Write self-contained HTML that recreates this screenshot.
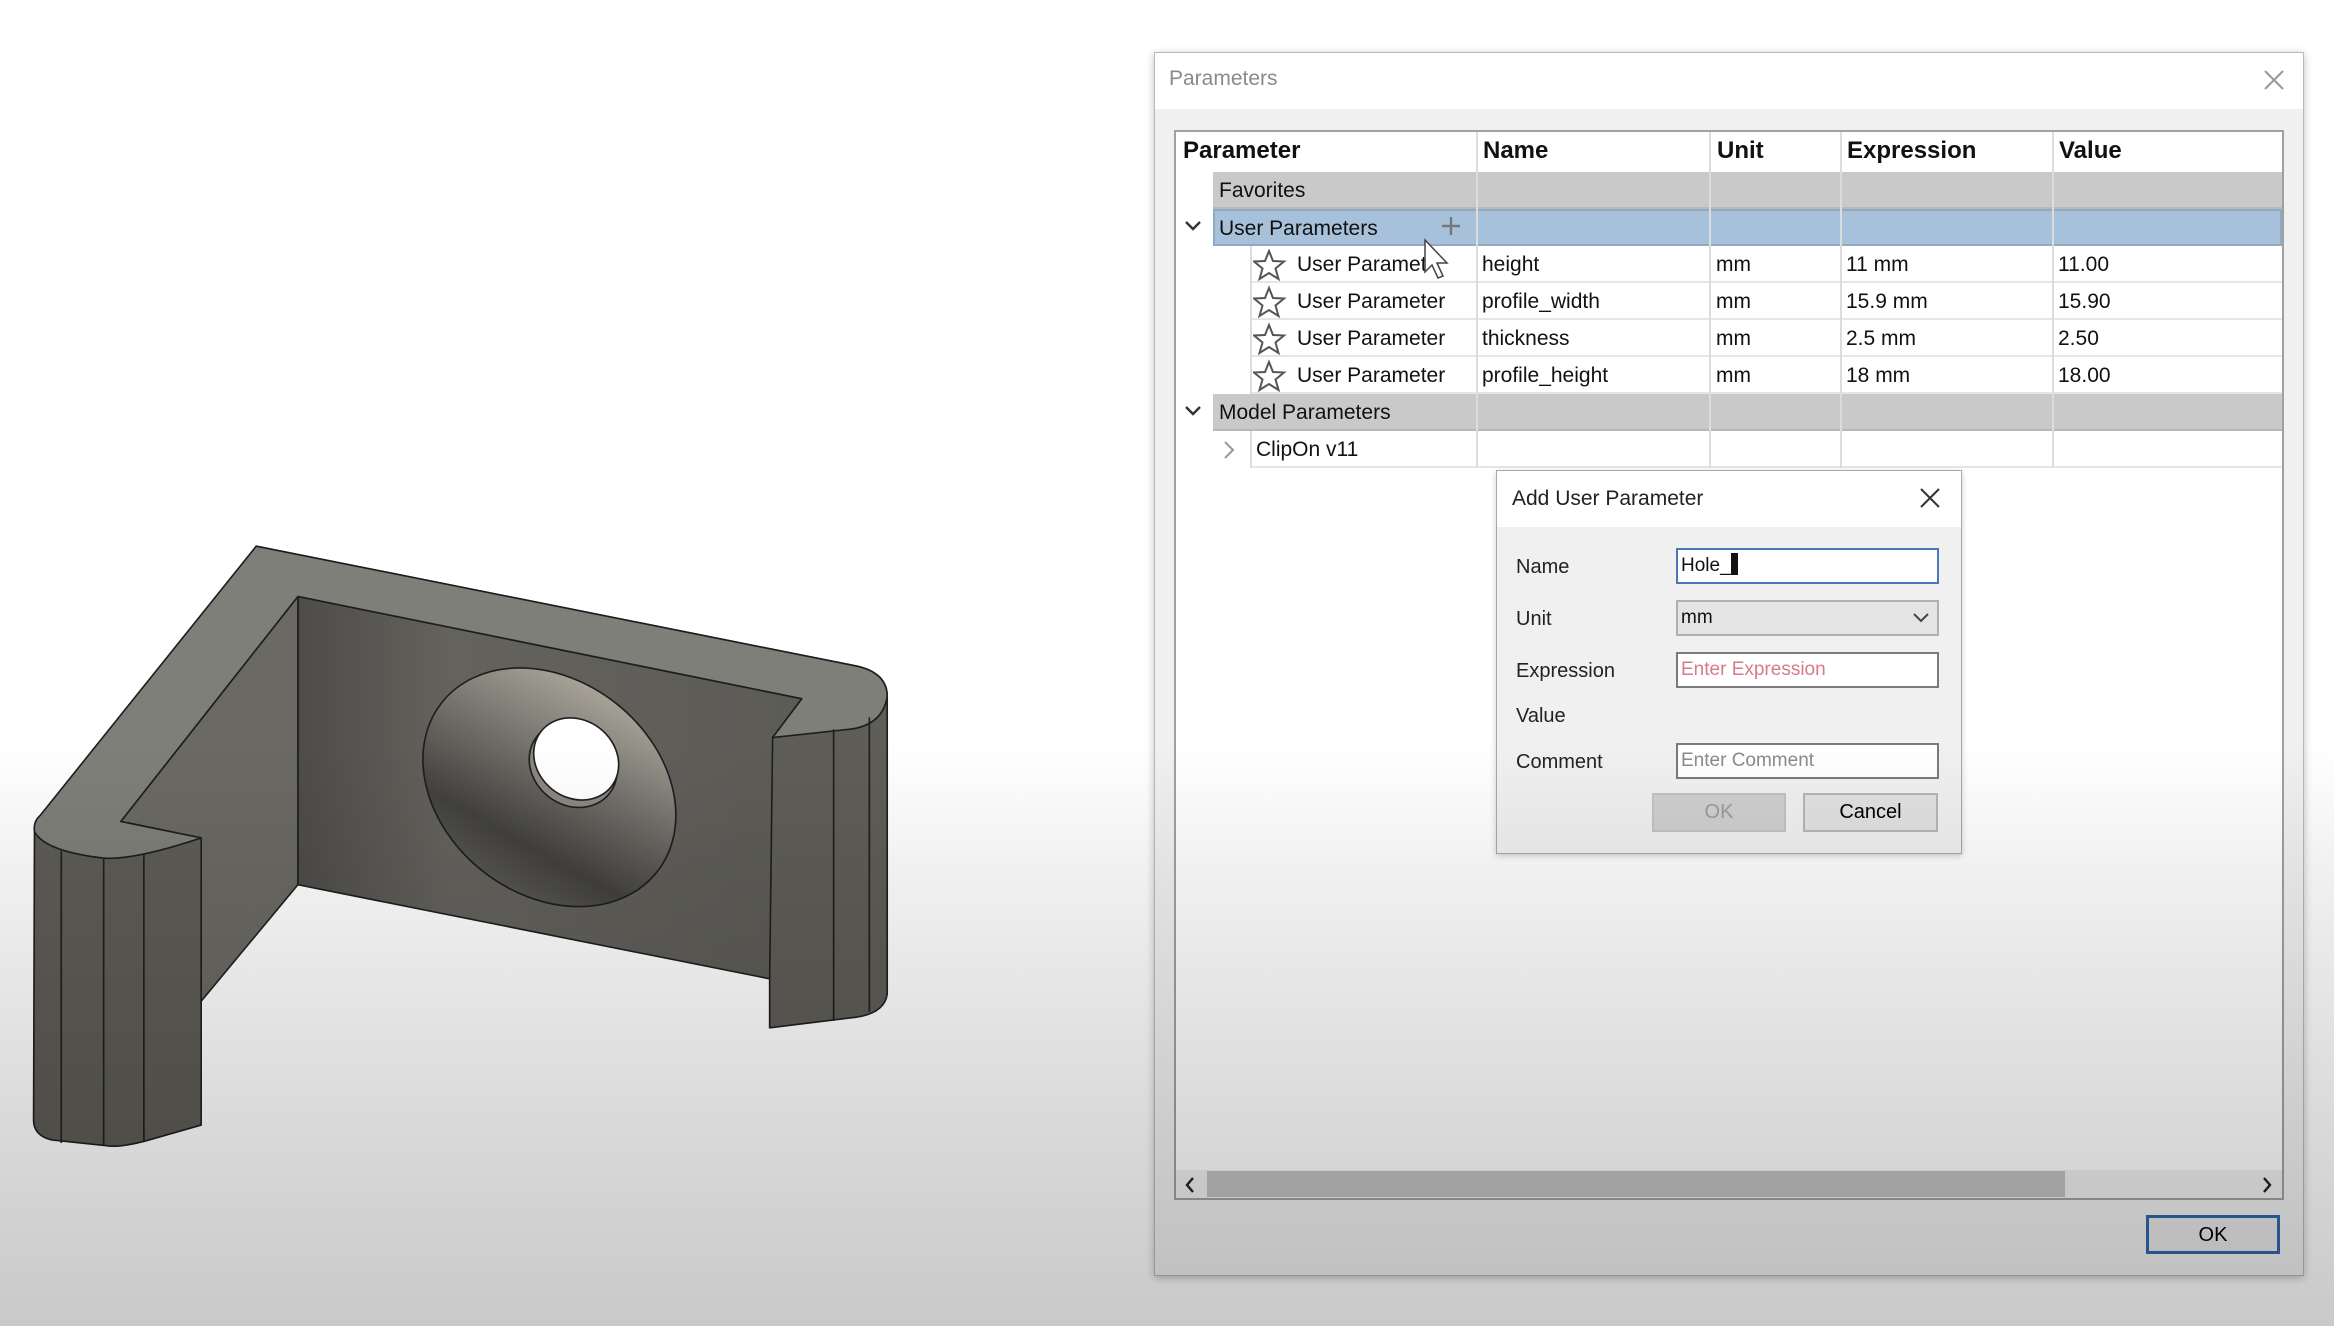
<!DOCTYPE html>
<html><head><meta charset="utf-8">
<style>
*{margin:0;padding:0;box-sizing:border-box}
html,body{width:2334px;height:1326px;overflow:hidden;background:#fff;font-family:"Liberation Sans",sans-serif}
.abs{position:absolute}
#dlg{left:1154px;top:52px;width:1150px;height:1224px;background:#f0f0f0;border:1px solid #b8b8b8;box-shadow:0 2px 8px rgba(0,0,0,.25)}
#tbar{left:0;top:0;width:1148px;height:56px;background:#fff}
#tbl{left:1174px;top:130px;width:1110px;height:1070px;background:#fff;border:2px solid #a0a0a0}
.hdr{font-weight:bold;font-size:24px;color:#111;top:137px}
.row{position:absolute;height:37px;border-bottom:2px solid #e6e6e6}
.cell{position:absolute;font-size:21px;color:#111;line-height:37px;white-space:nowrap}
.vl{position:absolute;width:2px;background:#dcdcdc}
.lbl{position:absolute;font-size:20px;color:#222}
.fld{position:absolute;left:1676px;width:263px;height:36px;background:#fff;border:2px solid #7a7a7a;font-size:19px;line-height:32px;padding-left:3px;color:#111}
.btn{position:absolute;height:39px;border:2px solid #b5b5b5;background:#e1e1e1;font-size:20px;text-align:center;line-height:35px}
</style></head><body>

<svg class="abs" style="left:0;top:0" width="2334" height="1326" viewBox="0 0 1568 891">
<defs>
<linearGradient id="bw" x1="0" y1="0" x2="1" y2="0"><stop offset="0" stop-color="#4d4c48"/><stop offset=".3" stop-color="#64625d"/><stop offset="1" stop-color="#5c5b56"/></linearGradient>
<linearGradient id="cone" x1="0.3" y1="0" x2="0.5" y2="1"><stop offset="0" stop-color="#aaa69b"/><stop offset=".45" stop-color="#6e6c67"/><stop offset=".8" stop-color="#42413d"/><stop offset="1" stop-color="#55544f"/></linearGradient>
</defs>
<g stroke="#1e1e1e" stroke-width="1.1" stroke-linejoin="round">
<path d="M172,367 L575,447.5 Q596,452 596,468 L596,668 Q594,682 571,684 L517,690.6 L517,493 L571,490 Q593,487 596,468 Z" fill="#5f5d57"/>
<path d="M200,400.8 L538.6,469.5 L519,495.6 L517,657.7 L200,594.5 Z" fill="url(#bw)"/>
<path d="M200,400.8 L200,594.5 L135,672.8 L135,563 L81,552 Z" fill="#6b6963"/>
<path d="M23,558.8 Q30,572 69.5,576.6 Q90,578 135,563 L135,756 L96.5,767 Q80,771 73,770 L34.7,766 Q22,763 22.4,752 Z" fill="#5e5c56"/>
<path d="M172,367 L575,447.5 Q596,452 596,468 Q593,487 571,490 L519,495.6 L538.6,469.5 L200,400.8 L81,552 L135,563 Q90,578 69.5,576.6 Q30,572 23,558.8 Q22,552 27,547.7 Z" fill="#7f7f79"/>
<line x1="41" y1="572" x2="41" y2="768" fill="none"/>
<line x1="69.5" y1="577" x2="69.5" y2="770" fill="none"/>
<line x1="96.5" y1="574" x2="96.5" y2="767" fill="none"/>
<line x1="560" y1="490" x2="560" y2="686" fill="none"/>
<line x1="584" y1="482" x2="584" y2="680" fill="none"/>
<ellipse cx="369" cy="529" rx="92" ry="72" transform="rotate(38 369 529)" fill="url(#cone)"/>
<ellipse cx="385" cy="514" rx="31" ry="27" transform="rotate(38 385 514)" fill="#8a8780"/>
<ellipse cx="387" cy="510" rx="30" ry="26" transform="rotate(38 387 510)" fill="#fff"/>
</g>
</svg>

<div id="dlg" class="abs">
 <div id="tbar" class="abs"></div>
 <div class="abs" style="left:14px;top:14px;font-size:21px;color:#8a8a8a">Parameters</div>
 <svg class="abs" style="left:1108px;top:16px" width="22" height="22"><path d="M2,2L20,20M20,2L2,20" stroke="#999" stroke-width="2"/></svg>
</div>

<div id="tbl" class="abs"></div>
<div class="abs hdr" style="left:1183px">Parameter</div>
<div class="abs hdr" style="left:1483px">Name</div>
<div class="abs hdr" style="left:1717px">Unit</div>
<div class="abs hdr" style="left:1847px">Expression</div>
<div class="abs hdr" style="left:2059px">Value</div>

<div class="row" style="left:1213px;top:172px;width:1069px;background:#c9c9c9;border-color:#b8b8b8"></div>
<div class="row" style="left:1213px;top:209px;width:1069px;background:#a8c1da;border:2px solid #90aac4"></div>
<div class="row" style="left:1250px;top:246px;width:1032px"></div>
<div class="row" style="left:1250px;top:283px;width:1032px"></div>
<div class="row" style="left:1250px;top:320px;width:1032px"></div>
<div class="row" style="left:1250px;top:357px;width:1032px"></div>
<div class="row" style="left:1213px;top:394px;width:1069px;background:#c9c9c9;border-color:#b8b8b8"></div>
<div class="row" style="left:1250px;top:431px;width:1032px"></div>

<div class="vl" style="left:1476px;top:132px;height:336px"></div>
<div class="vl" style="left:1709px;top:132px;height:336px"></div>
<div class="vl" style="left:1840px;top:132px;height:336px"></div>
<div class="vl" style="left:2052px;top:132px;height:336px"></div>
<div class="vl" style="left:1250px;top:246px;height:148px"></div>
<div class="vl" style="left:1250px;top:431px;height:37px"></div>

<div class="cell" style="left:1219px;top:172px">Favorites</div>
<div class="cell" style="left:1219px;top:210px">User Parameters</div>
<svg class="abs" style="left:1183px;top:218px" width="20" height="16"><path d="M3,4L10,11L17,4" fill="none" stroke="#333" stroke-width="2.4"/></svg>
<svg class="abs" style="left:1440px;top:215px" width="22" height="22"><path d="M11,2V20M2,11H20" stroke="#777" stroke-width="2.4"/></svg>
<div class="cell" style="left:1219px;top:394px">Model Parameters</div>
<svg class="abs" style="left:1183px;top:403px" width="20" height="16"><path d="M3,4L10,11L17,4" fill="none" stroke="#333" stroke-width="2.4"/></svg>
<div class="cell" style="left:1256px;top:431px">ClipOn v11</div>
<svg class="abs" style="left:1222px;top:440px" width="14" height="20"><path d="M3,2L11,10L3,18" fill="none" stroke="#999" stroke-width="2"/></svg>

<!-- stars -->
<svg class="abs" style="left:1253px;top:249px" width="34" height="160">
<g fill="none" stroke="#555" stroke-width="2">
<path id="st" d="M16,2L20,12L31,12.5L22.5,19.5L25.5,30L16,24L6.5,30L9.5,19.5L1,12.5L12,12Z"/>
<use href="#st" y="37"/><use href="#st" y="74"/><use href="#st" y="111"/>
</g></svg>

<div class="cell" style="left:1297px;top:246px">User Paramet</div>
<div class="cell" style="left:1297px;top:283px">User Parameter</div>
<div class="cell" style="left:1297px;top:320px">User Parameter</div>
<div class="cell" style="left:1297px;top:357px">User Parameter</div>
<div class="cell" style="left:1482px;top:246px">height</div>
<div class="cell" style="left:1482px;top:283px">profile_width</div>
<div class="cell" style="left:1482px;top:320px">thickness</div>
<div class="cell" style="left:1482px;top:357px">profile_height</div>
<div class="cell" style="left:1716px;top:246px">mm</div>
<div class="cell" style="left:1716px;top:283px">mm</div>
<div class="cell" style="left:1716px;top:320px">mm</div>
<div class="cell" style="left:1716px;top:357px">mm</div>
<div class="cell" style="left:1846px;top:246px">11 mm</div>
<div class="cell" style="left:1846px;top:283px">15.9 mm</div>
<div class="cell" style="left:1846px;top:320px">2.5 mm</div>
<div class="cell" style="left:1846px;top:357px">18 mm</div>
<div class="cell" style="left:2058px;top:246px">11.00</div>
<div class="cell" style="left:2058px;top:283px">15.90</div>
<div class="cell" style="left:2058px;top:320px">2.50</div>
<div class="cell" style="left:2058px;top:357px">18.00</div>

<!-- cursor -->
<svg class="abs" style="left:1422px;top:238px" width="40" height="50"><path d="M3,2L3,34L10,27L16,40L21,38L15,25L25,25Z" fill="#fff" stroke="#444" stroke-width="1.5"/></svg>

<!-- scrollbar -->
<div class="abs" style="left:1176px;top:1170px;width:1106px;height:28px;background:#f0f0f0"></div>
<div class="abs" style="left:1207px;top:1171px;width:858px;height:26px;background:#c2c2c2"></div>
<svg class="abs" style="left:1183px;top:1175px" width="14" height="20"><path d="M10,3L4,10L10,17" fill="none" stroke="#222" stroke-width="2.4"/></svg>
<svg class="abs" style="left:2260px;top:1175px" width="14" height="20"><path d="M4,3L10,10L4,17" fill="none" stroke="#222" stroke-width="2.4"/></svg>
<div class="btn" style="left:2146px;top:1215px;width:134px;border:3px solid #2f68aa;background:#e8e8e8">OK</div>

<!-- Add User Parameter -->
<div class="abs" style="left:1496px;top:470px;width:466px;height:384px;background:#f0f0f0;border:1px solid #a8a8a8;box-shadow:0 2px 6px rgba(0,0,0,.2)"></div>
<div class="abs" style="left:1497px;top:471px;width:464px;height:56px;background:#fff"></div>
<div class="abs" style="left:1512px;top:487px;font-size:21px;color:#222">Add User Parameter</div>
<svg class="abs" style="left:1919px;top:487px" width="22" height="22"><path d="M2,2L20,20M20,2L2,20" stroke="#333" stroke-width="2"/></svg>
<div class="lbl" style="left:1516px;top:556px">Name</div>
<div class="lbl" style="left:1516px;top:608px">Unit</div>
<div class="lbl" style="left:1516px;top:660px">Expression</div>
<div class="lbl" style="left:1516px;top:705px">Value</div>
<div class="lbl" style="left:1516px;top:751px">Comment</div>
<div class="fld" style="top:548px;border-color:#4a79b8">Hole_<span style="display:inline-block;width:7px;height:22px;background:#111;vertical-align:-4px"></span></div>
<div class="fld" style="top:600px;background:#e4e4e4;border-color:#b0b0b0">mm</div>
<svg class="abs" style="left:1912px;top:611px" width="18" height="14"><path d="M2,3L9,10L16,3" fill="none" stroke="#444" stroke-width="2"/></svg>
<div class="fld" style="top:652px;color:#d97a8a">Enter Expression</div>
<div class="fld" style="top:743px;color:#8a8a8a">Enter Comment</div>
<div class="btn" style="left:1652px;top:793px;width:134px;background:#cfcfcf;border-color:#c2c2c2;color:#9a9a9a">OK</div>
<div class="btn" style="left:1803px;top:793px;width:135px">Cancel</div>

<!-- global vignette -->
<div class="abs" style="left:0;top:0;width:2334px;height:1326px;pointer-events:none;background:linear-gradient(to bottom,rgba(0,0,0,0) 0%,rgba(0,0,0,0) 56%,rgba(0,0,0,.06) 66%,rgba(0,0,0,.15) 85%,rgba(0,0,0,.21) 100%)"></div>
</body></html>
